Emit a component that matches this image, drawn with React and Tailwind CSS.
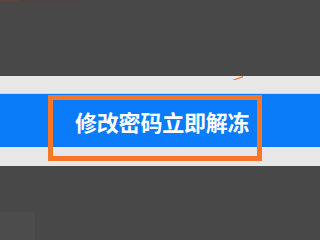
import React from 'react';

const App = () => {
  return (
    <div className="w-[320px] h-[240px] overflow-hidden bg-[#484848] flex flex-col" style={{ fontFamily: '"Noto Sans CJK SC", "Noto Sans", sans-serif' }}>
      {/* top dark area */}
      <div className="h-[76px] shrink-0">
        <div className="w-[80px] h-[5px] bg-[#4a4646]">
          <div className="w-[20px] h-[2px] bg-[#5a4540]" />
        </div>
      </div>

      {/* light band with blue bar */}
      <div className="relative h-[90px] shrink-0 bg-[#e7e7e7] pt-[17px]">
        <div className="h-px bg-[#bcd9f3]" />
        <div className="h-[53px] bg-[#0a7cfa] flex items-center pl-[75px]">
          <span className="text-white font-bold text-[22px] leading-none tracking-[-0.2px]">修改密码立即解冻</span>
        </div>
        {/* annotation marks drawn over the screenshot */}
        <div className="absolute left-[48px] top-[19px] w-[214px] h-[66px] border-[5px] border-[#f5782a]" />
        <div className="absolute left-[232px] top-0 w-[11px] h-[4px] bg-[#f5782a] [clip-path:polygon(0_100%,100%_0,100%_40%,30%_100%)]" />
      </div>

      {/* bottom dark area */}
      <div className="flex-1 flex items-end">
        <div className="w-[35px] h-[28px] bg-[#4c4c4c]" />
      </div>
    </div>
  );
};

export default App;
